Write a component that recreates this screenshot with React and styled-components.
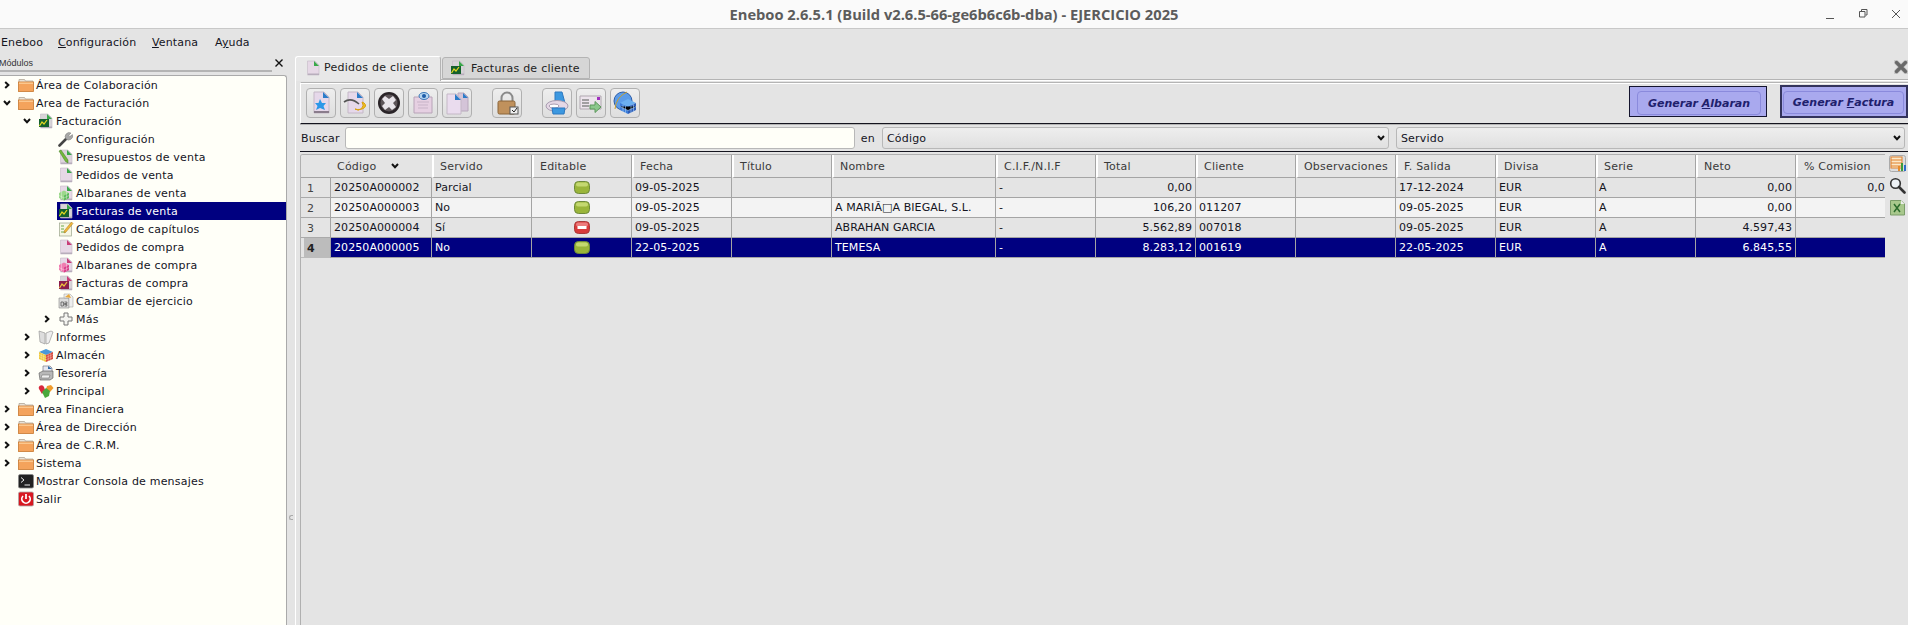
import React from "react";
import styled, { createGlobalStyle } from "styled-components";

const GlobalStyle = createGlobalStyle`
  html, body {
    margin: 0;
    padding: 0;
    background: #e4e4e4;
    overflow: hidden;
  }
  * {
    box-sizing: border-box;
  }
`;

const Window = styled.div`
  width: 1908px;
  height: 625px;
  display: flex;
  flex-direction: column;
  overflow: hidden;
  background: #e4e4e4;
  color: #14141e;
  font-family: "DejaVu Sans", sans-serif;
  font-size: 11px;
`;

const TitleBar = styled.div`
  height: 29px;
  flex: none;
  display: grid;
  grid-template-columns: 1fr auto 1fr;
  align-items: center;
  background: #fafafa;
  border-bottom: 1px solid #c8c8c8;
`;

const Title = styled.div`
  grid-column: 2;
  font-family: "Open Sans", sans-serif;
  font-size: 14.7px;
  font-weight: 700;
  color: #5c5c5c;
`;

const WindowButtons = styled.div`
  grid-column: 3;
  justify-self: end;
  display: flex;
  align-items: center;
  gap: 23px;
  padding-right: 7px;
`;

const MenuBar = styled.div`
  height: 27px;
  flex: none;
  display: flex;
  align-items: center;
  padding-left: 1px;
  letter-spacing: 0.15px;
`;

const MenuItem = styled.span`
  width: ${(p) => p.$w}px;
  white-space: nowrap;
`;

const Main = styled.div`
  flex: 1;
  min-height: 0;
  display: flex;
`;

const Sidebar = styled.div`
  width: 287px;
  flex: none;
  display: flex;
  flex-direction: column;
`;

const DockTitle = styled.div`
  height: 19px;
  flex: none;
  display: flex;
  align-items: center;
  justify-content: space-between;
  padding: 0 3px 5px 0;
`;

const DockLabel = styled.span`
  width: 272px;
  margin-top: 4px;
  padding-bottom: 2px;
  border-bottom: 2px solid #b4b4b4;
  font-family: "Liberation Sans", sans-serif;
  font-size: 9px;
  color: #333;
  text-indent: -1px;
  overflow: hidden;
`;

const Tree = styled.div`
  flex: 1;
  background: #fffff8;
  border: 1px solid #aaa;
  border-left: 0;
  border-bottom: 0;
  border-top-right-radius: 3px;
`;

const TreeRow = styled.div`
  height: 18px;
  display: flex;
  align-items: center;
  padding-left: ${(p) => p.$level * 20}px;
  letter-spacing: 0.2px;
`;

const Arrow = styled.span`
  width: 17px;
  height: 18px;
  flex: none;
  display: flex;
  align-items: center;
  justify-content: center;
  padding-right: 3px;
`;

const TreeItem = styled.div`
  flex: 1;
  height: 18px;
  display: flex;
  align-items: center;
  gap: 2px;
  padding-left: 1px;
  background: ${(p) => (p.$selected ? "#000080" : "transparent")};
  color: ${(p) => (p.$selected ? "#fff" : "inherit")};
`;

const IconSlot = styled.span`
  width: 16px;
  height: 16px;
  flex: none;
  display: flex;
`;

const Splitter = styled.div`
  width: 8px;
  flex: none;
  display: flex;
  align-items: flex-end;
  justify-content: center;
  padding-bottom: 105px;
`;

const SplitterDot = styled.span`
  width: 4px;
  height: 5px;
  border-left: 1px solid #aaa;
  border-top: 1px solid #aaa;
  border-bottom: 1px solid #aaa;
  border-radius: 3px 0 0 3px;
`;

const Content = styled.div`
  flex: 1;
  min-width: 0;
  display: flex;
  flex-direction: column;
`;

const TabBar = styled.div`
  height: 23px;
  flex: none;
  display: flex;
  align-items: flex-end;
  gap: 1px;
`;

const Tab = styled.div`
  width: ${(p) => p.$w}px;
  height: ${(p) => (p.$active ? 25 : 22)}px;
  margin-bottom: ${(p) => (p.$active ? -2 : 0)}px;
  position: relative;
  z-index: ${(p) => (p.$active ? 1 : 0)};
  display: flex;
  align-items: center;
  gap: ${(p) => (p.$active ? 3 : 5)}px;
  padding: ${(p) => (p.$active ? "0 0 3px 9px" : "0 0 0 7px")};
  background: ${(p) => (p.$active ? "#e8e8e8" : "#d6d6d6")};
  border: 1px solid #b4b4b4;
  border-bottom: ${(p) => (p.$active ? "0" : "1px solid #b4b4b4")};
  border-top-color: ${(p) => (p.$active ? "#fff" : "#b4b4b4")};
  border-left-color: ${(p) => (p.$active ? "#fff" : "#b4b4b4")};
  border-radius: 3px 3px 0 0;
  letter-spacing: 0.25px;
  color: #222;
`;

const CornerClose = styled.span`
  margin-left: auto;
  margin-bottom: 5px;
  display: flex;
`;

const Pane = styled.div`
  flex: 1;
  min-height: 0;
  display: flex;
  flex-direction: column;
  padding-left: 4px;
  border-top: 1px solid #b4b4b4;
  border-left: 1px solid #fff;
  box-shadow: inset 0 1px 0 #fff;
`;

const Toolbar = styled.div`
  height: 42px;
  margin-top: 2px;
  flex: none;
  display: flex;
  align-items: center;
  padding-left: 1px;
  border-top: 1px solid #b4b4b4;
  border-left: 1px solid #fff;
  box-shadow: inset 0 1px 0 #fff;
  border-bottom: 1px solid #14141e;
`;

const ToolButton = styled.button`
  width: 30px;
  height: 30px;
  flex: none;
  margin-left: ${(p) => p.$gap ?? 4}px;
  padding: 0;
  display: flex;
  align-items: center;
  justify-content: center;
  background: linear-gradient(#eeeeee, #dedede);
  border: 1px solid #b0b0b0;
  border-radius: 4px;
`;

const GenerateButton = styled.button`
  width: ${(p) => p.$w}px;
  height: ${(p) => p.$h}px;
  flex: none;
  margin-left: ${(p) => p.$left};
  margin-bottom: 3px;
  padding: ${(p) => p.$pad};
  display: flex;
  background: #a9a9ee;
  border: ${(p) => (p.$thick ? "2px solid #33335c" : "1px solid #14142e")};
`;

const GenerateInner = styled.span`
  flex: 1;
  display: flex;
  align-items: center;
  justify-content: center;
  border: 1px solid #8a8adc;
  border-radius: 4px;
  font-family: "DejaVu Sans", sans-serif;
  font-size: 11px;
  font-weight: 700;
  font-style: italic;
  color: #20206c;
  white-space: pre;
`;

const SearchRow = styled.div`
  height: 28px;
  flex: none;
  display: flex;
  align-items: center;
  padding: 1px 0 1px 1px;
  border-top: 1px solid #b4b4b4;
  border-bottom: 1px solid #14141e;
  letter-spacing: 0.2px;
`;

const SearchInput = styled.div`
  width: 510px;
  height: 22px;
  margin: 0 6px 0 5px;
  flex: none;
  background: #fffff8;
  border: 1px solid #b8b8b8;
  border-radius: 3px;
`;

const Select = styled.div`
  width: ${(p) => p.$w}px;
  height: 22px;
  margin-left: ${(p) => p.$left}px;
  flex: none;
  display: flex;
  align-items: center;
  justify-content: space-between;
  padding: 0 3px 0 4px;
  background: linear-gradient(#eeeeee, #e0e0e0);
  border: 1px solid #b8b8b8;
  border-radius: 3px;
`;

const TableArea = styled.div`
  flex: 1;
  min-height: 0;
  display: flex;
  margin-top: 2px;
`;

const Table = styled.div`
  width: 1585px;
  flex: none;
  overflow: hidden;
  border-top: 1px solid #b0b0b0;
  border-left: 1px solid #b0b0b0;
  border-top-left-radius: 3px;
`;

const COLUMNS = "30px 101px repeat(4, 100px) 164px repeat(9, 100px)";

const GridRow = styled.div`
  width: 1700px;
  height: ${(p) => (p.$header ? 23 : 20)}px;
  display: grid;
  grid-template-columns: ${COLUMNS};
  background: ${(p) =>
    p.$selected ? "#000080" : p.$even ? "#f3f3f3" : "#e4e4e4"};
  color: ${(p) => (p.$selected ? "#fff" : "#14141e")};
`;

const HeaderCell = styled.div`
  display: flex;
  align-items: center;
  justify-content: space-between;
  padding: 0 32px 0 6px;
  background: #e4e4e4;
  color: #3a3a3a;
  border-left: ${(p) => (p.$first ? "0" : "2px solid #fff")};
  border-bottom: 1px solid #a4a4a4;
  border-right: 1px solid ${(p) => (p.$first ? "#e4e4e4" : "#a4a4a4")};
  letter-spacing: 0.2px;
  white-space: nowrap;
`;

const RowHeader = styled.div`
  display: flex;
  align-items: center;
  padding-left: 6px;
  background: ${(p) =>
    p.$selected ? "linear-gradient(90deg, #e4e4e4 3px, #bcbcbc 3px)" : "#e4e4e4"};
  color: ${(p) => (p.$selected ? "#222" : "#444")};
  font-weight: ${(p) => (p.$selected ? 700 : 400)};
  box-shadow: inset 0 -1px 0 ${(p) => (p.$selected ? "#bcbcbc" : "#aaa")};
  border-right: 1px solid #a4a4a4;
`;

const Cell = styled.div`
  display: flex;
  align-items: center;
  justify-content: ${(p) =>
    p.$align === "right"
      ? "flex-end"
      : p.$align === "center"
      ? "center"
      : "flex-start"};
  padding: 0 3px;
  border-right: 1px solid #a4a4a4;
  border-bottom: 1px solid #a4a4a4;
  white-space: nowrap;
  letter-spacing: 0.08px;
`;

const SideTools = styled.div`
  flex: none;
  display: flex;
  flex-direction: column;
  gap: 5px;
  padding: 1px 0 0 4px;
`;

const SideTool = styled.span`
  width: 17px;
  height: 17px;
  display: flex;
`;

const Svg = ({ size = 16, children }) => (
  <svg width={size} height={size} viewBox="0 0 16 16" style={{ display: "block" }}>
    {children}
  </svg>
);

const Big = ({ children }) => (
  <svg width="24" height="24" viewBox="0 0 24 24" style={{ display: "block" }}>
    {children}
  </svg>
);

const Chevron = ({ open }) => (
  <svg width="8" height="8" viewBox="0 0 8 8" style={{ display: "block" }}>
    <path
      d={open ? "M1 2 L4 5.2 L7 2" : "M2.2 1 L5.4 4 L2.2 7"}
      fill="none"
      stroke="#111"
      strokeWidth="2"
    />
  </svg>
);

const Folder = () => (
  <Svg>
    <path d="M1 2.5 h5.5 l1 1.5 H15 v2 H1z" fill="#e8e2d8" stroke="#a89c8c" strokeWidth=".7" />
    <rect x="0.5" y="5" width="15" height="9.5" fill="#f4a35c" stroke="#c87830" strokeWidth=".8" />
    <rect x="1" y="5.5" width="14" height="1.5" fill="#fbc78e" />
  </Svg>
);

const Page = ({ corner = "#3aa84a", fill = "#e6d8e6" }) => (
  <>
    <path d="M2.5 1 H10 L14 5 V15 H2.5z" fill={fill} stroke="#c4b8c6" strokeWidth=".6" />
    <path d="M9 1 L14 6 H9z" fill={corner} />
    <path d="M3 13.5 H14 V15 H3z" fill="#b8aebc" />
  </>
);

const DocIcon = ({ corner }) => (
  <Svg>
    <Page corner={corner} />
  </Svg>
);

const ChartDoc = ({ corner = "#3aa84a", base = "#14602c", line = "#e4d820" }) => (
  <Svg>
    <Page corner={corner} fill="#d8d4d8" />
    <rect x="1" y="6" width="10" height="8" fill={base} />
    <path d="M1.5 13 L4 9 L6 11 L9 7" fill="none" stroke={line} strokeWidth="1.2" />
  </Svg>
);

const CubeDoc = ({ corner, cube, shade }) => (
  <Svg>
    <Page corner={corner} />
    <path d="M1 8 L6 5.5 L11 8 V13 L6 15.5 L1 13z" fill={cube} />
    <path d="M6 10.5 V15.5 L11 13 V8z" fill={shade} />
    <path d="M1 10.5 L6 13 L11 10.5 M3.5 6.8 V14 M8.5 6.8 V14" fill="none" stroke="#fff" strokeWidth=".5" opacity=".7" />
  </Svg>
);

const WrenchIcon = () => (
  <Svg>
    <path d="M1.5 14.5 L8.5 7.5" stroke="#444" strokeWidth="2.6" strokeLinecap="round" />
    <path d="M8 8 A4 4 0 0 1 13 2 L10.8 4.2 L11.8 5.6 L14.4 3.6 A4 4 0 0 1 8 8z" fill="#a8a8a8" stroke="#777" strokeWidth=".5" />
  </Svg>
);

const PencilDoc = () => (
  <Svg>
    <Page fill="#ddd4dd" corner="#3aa84a" />
    <path d="M1 2 L3 1 L10 11 L10 14 L7.5 12.5z" fill="#74b83c" stroke="#3c7a20" strokeWidth=".5" />
  </Svg>
);

const NoteIcon = () => (
  <Svg>
    <rect x="1.5" y="2" width="12" height="13" fill="#f6f6e4" stroke="#9aa48c" strokeWidth=".7" />
    <path d="M3 5 H6 M3 8 H6 M3 11 H8" stroke="#6aa84a" strokeWidth="1" />
    <path d="M13.5 1 L15 2.5 L8 11 L6 12 L6.5 9.5z" fill="#f0b83c" stroke="#a87820" strokeWidth=".5" />
  </Svg>
);

const OsDoc = () => (
  <Svg>
    <path d="M1 5 H11 V15 H1z" fill="#dcdcdc" stroke="#888" strokeWidth=".6" />
    <path d="M6 1 H12 L15 4 V14 H11 V5 H6z" fill="#eee" stroke="#999" strokeWidth=".5" />
    <path d="M7 4 L11 1 L13 5z" fill="#e8a83c" />
    <path d="M3 9 h2.4 v4 h-2.4z M6.5 9 h2.4 v1.5 h-2.4 v1 h2.4 v1.5 h-2.4" fill="none" stroke="#555" strokeWidth=".8" />
  </Svg>
);

const PlusIcon = () => (
  <Svg>
    <path d="M6 2 H10 V6 H14 V10 H10 V14 H6 V10 H2 V6 H6z" fill="#f4f4f0" stroke="#777" strokeWidth="1" />
  </Svg>
);

const BookIcon = () => (
  <Svg>
    <path d="M1 2 L7 4 V15 L2 13z" fill="#ddd" stroke="#999" strokeWidth=".7" />
    <path d="M8 4 L13 2 L15 3 L11 14 L8 15z" fill="#eee" stroke="#999" strokeWidth=".7" />
  </Svg>
);

const RubikIcon = () => (
  <Svg>
    <path d="M1 5 L8 2 L15 5 L8 8z" fill="#4a98d8" />
    <path d="M1 5 L8 8 V15 L1 12z" fill="#f0c83c" />
    <path d="M15 5 L8 8 V15 L15 12z" fill="#d84a3c" />
    <path d="M3.3 6 V13 M5.6 7 V14 M1 7.4 L8 10.4 M1 9.7 L8 12.7 M10.3 7 V14 M12.6 6 V13 M15 7.4 L8 10.4 M15 9.7 L8 12.7" stroke="#fff" strokeWidth=".5" opacity=".6" />
  </Svg>
);

const TreasuryIcon = () => (
  <Svg>
    <path d="M5 1 H12 L14 3 V8 H5z" fill="#e8e8f0" stroke="#667" strokeWidth=".6" />
    <path d="M10 1 L14 4 H10z" fill="#2c6ca8" />
    <path d="M1 8 L5 6 H15 V13 L12 15 H2z" fill="#b8b8b8" stroke="#555" strokeWidth=".6" />
    <path d="M4 10 H12 L11 13 H3z" fill="#eee" stroke="#666" strokeWidth=".5" />
  </Svg>
);

const PrincipalIcon = () => (
  <Svg>
    <path d="M1 6 A2.5 2.5 0 0 1 6 4 L7 7 L4 11z" fill="#d8283c" />
    <path d="M9 3 L13 2 L15.5 5 L12 9 L8 6z" fill="#f09c2c" />
    <path d="M4 9 L8 5 L12 8 L11 13 L7 15z" fill="#4aa83c" />
  </Svg>
);

const ConsoleIcon = () => (
  <Svg>
    <rect x="0.5" y="1.5" width="15" height="13.5" rx="1.5" fill="#222" stroke="#888" strokeWidth=".8" />
    <path d="M3 4.5 L6 7 L3 9.5" fill="none" stroke="#eee" strokeWidth="1" />
    <path d="M6.5 12 H12" stroke="#eee" strokeWidth="1" />
  </Svg>
);

const PowerIcon = () => (
  <Svg>
    <rect x="0.5" y="1" width="15" height="14" rx="1.5" fill="#d81820" stroke="#b0a8a8" strokeWidth=".8" />
    <path d="M5 5 A4.2 4.2 0 1 0 11 5" fill="none" stroke="#fff" strokeWidth="1.7" />
    <path d="M8 3 V8" stroke="#fff" strokeWidth="1.7" />
  </Svg>
);

const TREE = [
  { level: 0, arrow: "closed", icon: <Folder />, label: "Área de Colaboración" },
  { level: 0, arrow: "open", icon: <Folder />, label: "Area de Facturación" },
  { level: 1, arrow: "open", icon: <ChartDoc />, label: "Facturación" },
  { level: 2, icon: <WrenchIcon />, label: "Configuración" },
  { level: 2, icon: <PencilDoc />, label: "Presupuestos de venta" },
  { level: 2, icon: <DocIcon />, label: "Pedidos de venta" },
  { level: 2, icon: <CubeDoc corner="#3aa84a" cube="#9cd88c" shade="#5cb85c" />, label: "Albaranes de venta" },
  { level: 2, icon: <ChartDoc />, label: "Facturas de venta", selected: true },
  { level: 2, icon: <NoteIcon />, label: "Catálogo de capítulos" },
  { level: 2, icon: <DocIcon corner="#c83c78" />, label: "Pedidos de compra" },
  { level: 2, icon: <CubeDoc corner="#c83c78" cube="#f07cb0" shade="#d83c88" />, label: "Albaranes de compra" },
  { level: 2, icon: <ChartDoc corner="#c83c78" base="#8c1c4c" line="#f0c83c" />, label: "Facturas de compra" },
  { level: 2, icon: <OsDoc />, label: "Cambiar de ejercicio" },
  { level: 2, arrow: "closed", icon: <PlusIcon />, label: "Más" },
  { level: 1, arrow: "closed", icon: <BookIcon />, label: "Informes" },
  { level: 1, arrow: "closed", icon: <RubikIcon />, label: "Almacén" },
  { level: 1, arrow: "closed", icon: <TreasuryIcon />, label: "Tesorería" },
  { level: 1, arrow: "closed", icon: <PrincipalIcon />, label: "Principal" },
  { level: 0, arrow: "closed", icon: <Folder />, label: "Area Financiera" },
  { level: 0, arrow: "closed", icon: <Folder />, label: "Área de Dirección" },
  { level: 0, arrow: "closed", icon: <Folder />, label: "Área de C.R.M." },
  { level: 0, arrow: "closed", icon: <Folder />, label: "Sistema" },
  { level: 0, icon: <ConsoleIcon />, label: "Mostrar Consola de mensajes" },
  { level: 0, icon: <PowerIcon />, label: "Salir" },
];

const HEADERS = [
  "Código",
  "Servido",
  "Editable",
  "Fecha",
  "Título",
  "Nombre",
  "C.I.F./N.I.F",
  "Total",
  "Cliente",
  "Observaciones",
  "F. Salida",
  "Divisa",
  "Serie",
  "Neto",
  "% Comision",
];

const ROWS = [
  { codigo: "20250A000002", servido: "Parcial", ok: true, fecha: "09-05-2025", nombre: "", total: "0,00", cliente: "", salida: "17-12-2024", neto: "0,00", comision: "0,00" },
  { codigo: "20250A000003", servido: "No", ok: true, fecha: "09-05-2025", nombre: "A MARIÃ\u25A1A BIEGAL, S.L.", total: "106,20", cliente: "011207", salida: "09-05-2025", neto: "0,00", comision: "" },
  { codigo: "20250A000004", servido: "Sí", ok: false, fecha: "09-05-2025", nombre: "ABRAHAN GARCIA", total: "5.562,89", cliente: "007018", salida: "09-05-2025", neto: "4.597,43", comision: "" },
  { codigo: "20250A000005", servido: "No", ok: true, fecha: "22-05-2025", nombre: "TEMESA", total: "8.283,12", cliente: "001619", salida: "22-05-2025", neto: "6.845,55", comision: "" },
];

const EditablePill = ({ ok }) => (
  <svg width="16" height="13" viewBox="0 0 16 13" style={{ display: "block" }}>
    <rect x="0.5" y="0.5" width="15" height="12" rx="4" fill={ok ? "#9ab53a" : "#d83a3a"} stroke={ok ? "#6e8a3c" : "#a83a3a"} />
    <rect x="2" y="1.5" width="12" height="4" rx="2" fill={ok ? "#c4d870" : "#ec7c7c"} />
    {!ok && <rect x="3.5" y="5" width="9" height="3" fill="#fff" />}
  </svg>
);

const TOOL_ICONS = [
  {
    key: "new",
    draw: (
      <>
        <path d="M5 1 H15 L20 6 V22 H5z" fill="#e6d8ea" stroke="#c4b8c6" />
        <path d="M14 1 L20 7 H14z" fill="#2c7cc8" />
        <path d="M20 20 H5 V22 H20z" fill="#8a7c8c" />
        <path d="M11 8 L13 12 L17 12 L14.5 15 L16 19 L11 17 L7 19 L8.5 15 L6 12 L9.5 12z" fill="#2c98e8" />
      </>
    ),
  },
  {
    key: "edit",
    draw: (
      <>
        <path d="M5 1 H15 L20 6 V22 H5z" fill="#e6d8ea" stroke="#c4b8c6" />
        <path d="M14 1 L20 7 H14z" fill="#2c7cc8" />
        <path d="M1 11 Q8 6 16 13" fill="none" stroke="#555" strokeWidth="1.6" />
        <path d="M19 11 A5 5 0 0 1 12 18 A7 4 0 0 0 19 11z" fill="#f0c020" stroke="#d8a010" />
      </>
    ),
  },
  {
    key: "delete",
    draw: (
      <>
        <circle cx="12" cy="12" r="11" fill="#2a2428" />
        <circle cx="12" cy="12" r="8.5" fill="#5c5458" />
        <path d="M8 5 L12 8 L16 5 L19 9 L16 12 L19 16 L15 19 L12 16 L8 19 L5 15 L8 12 L5 8z" fill="#e8e4ea" />
      </>
    ),
  },
  {
    key: "view",
    draw: (
      <>
        <path d="M3 6 H21 V22 H3z" fill="#e6d0e2" stroke="#b8a4b8" />
        <path d="M6 11 H18 M7 14 H17 M7 17 H17" stroke="#c8b4c8" />
        <ellipse cx="13" cy="5" rx="5" ry="3.5" fill="#b4d4f0" stroke="#3c78b8" />
        <circle cx="13" cy="5" r="2" fill="#1c5ca8" />
      </>
    ),
  },
  {
    key: "copy",
    draw: (
      <>
        <path d="M13 2 H19 L23 6 V20 H13z" fill="#d4c4d8" stroke="#b8a8bc" />
        <path d="M18 2 L23 7 H18z" fill="#2c7cc8" />
        <path d="M2 3 H11 L16 8 V23 H2z" fill="#eadcee" stroke="#c4b8c6" />
        <path d="M10 3 L16 9 H10z" fill="#2c7cc8" />
      </>
    ),
  },
  {
    key: "lock",
    gap: 20,
    draw: (
      <>
        <path d="M6.5 11 V7 A5.5 5.5 0 0 1 17.5 7 V11" fill="none" stroke="#8a8a8a" strokeWidth="2" />
        <rect x="3" y="10" width="17" height="13" rx="1.5" fill="#c0915c" stroke="#8a6438" />
        <rect x="15" y="16" width="8" height="7" fill="#f0f0f0" stroke="#555" />
        <path d="M17 19 L19 21 L22 17" fill="none" stroke="#222" />
      </>
    ),
  },
  {
    key: "print",
    gap: 20,
    draw: (
      <>
        <path d="M10 1 H17 L20 12 H10z" fill="#3c98e0" stroke="#2c78c0" />
        <ellipse cx="12" cy="15" rx="11" ry="5.5" fill="#e6d8e6" stroke="#a89cb0" />
        <ellipse cx="9" cy="15" rx="5" ry="2" fill="#fff" stroke="#a89cb0" />
        <path d="M7 17 H20 L19 23 H8z" fill="#3c98e0" stroke="#2c78c0" />
      </>
    ),
  },
  {
    key: "mail",
    draw: (
      <>
        <path d="M1 5 H22 V18 H1z" fill="#ece4ec" stroke="#b0a8b0" />
        <path d="M3 9 H10 M3 12 H10 M3 15 H10" stroke="#888" strokeWidth="1.3" />
        <rect x="18" y="6" width="3" height="3" fill="#a030c0" />
        <path d="M11 14 H16 V10.5 L22 16 L16 21.5 V18 H11z" fill="#8cc88c" stroke="#5c985c" />
      </>
    ),
  },
  {
    key: "web",
    draw: (
      <>
        <circle cx="10" cy="10" r="9" fill="#5c9ce8" stroke="#2c5ca8" />
        <path d="M2 18 Q3 6 14 1" fill="none" stroke="#c8a030" strokeWidth="1" />
        <path d="M7 12 L15 8 L23 12 L15 16z" fill="#6cb0f0" />
        <path d="M7 12 L15 16 V23 L7 19z" fill="#3c7cd8" />
        <path d="M23 12 L15 16 V23 L23 19z" fill="#2c5cb8" />
        <path d="M10 13.5 V21 M12.5 15 V22 M18 15 V22 M20.5 13.5 V21 M7 15.5 L15 19.5 L23 15.5" stroke="#a8d0f8" strokeWidth=".6" />
      </>
    ),
  },
];

export default function App() {
  return (
    <Window>
      <GlobalStyle />
      <TitleBar>
        <Title>Eneboo 2.6.5.1 (Build v2.6.5-66-ge6b6c6b-dba) - EJERCICIO 2025</Title>
        <WindowButtons>
          <svg width="10" height="10" viewBox="0 0 10 10">
            <path d="M1 9.5 H9" stroke="#555" strokeWidth="1" />
          </svg>
          <svg width="10" height="10" viewBox="0 0 10 10">
            <path d="M3.5 2 V0.5 H9 V6 H7.5 M1.5 2.5 H7 V8 H1.5z" fill="none" stroke="#555" strokeWidth="1" />
          </svg>
          <svg width="10" height="10" viewBox="0 0 10 10">
            <path d="M1 1 L9 9 M9 1 L1 9" stroke="#555" strokeWidth="1" />
          </svg>
        </WindowButtons>
      </TitleBar>

      <MenuBar>
        <MenuItem $w={57}>Eneboo</MenuItem>
        <MenuItem $w={94}><u>C</u>onfiguración</MenuItem>
        <MenuItem $w={63}><u>V</u>entana</MenuItem>
        <MenuItem $w={50}>A<u>y</u>uda</MenuItem>
      </MenuBar>

      <Main>
        <Sidebar>
          <DockTitle>
            <DockLabel>Módulos</DockLabel>
            <svg width="10" height="10" viewBox="0 0 10 10">
              <path d="M1.5 1.5 L8.5 8.5 M8.5 1.5 L1.5 8.5" stroke="#111" strokeWidth="1.4" />
            </svg>
          </DockTitle>
          <Tree>
            {TREE.map((row) => (
              <TreeRow key={row.label} $level={row.level}>
                <Arrow>{row.arrow && <Chevron open={row.arrow === "open"} />}</Arrow>
                <TreeItem $selected={row.selected}>
                  <IconSlot>{row.icon}</IconSlot>
                  {row.label}
                </TreeItem>
              </TreeRow>
            ))}
          </Tree>
        </Sidebar>

        <Splitter>
          <SplitterDot />
        </Splitter>

        <Content>
          <TabBar>
            <Tab $active $w={146}>
              <IconSlot><DocIcon /></IconSlot>
              Pedidos de cliente
            </Tab>
            <Tab $w={148}>
              <IconSlot><ChartDoc /></IconSlot>
              Facturas de cliente
            </Tab>
            <CornerClose>
              <svg width="14" height="14" viewBox="0 0 14 14">
                <path d="M2 2 L12 12 M12 2 L2 12" stroke="#c8c8c8" strokeWidth="5" strokeLinecap="round" />
                <path d="M2.5 2.5 L11.5 11.5 M11.5 2.5 L2.5 11.5" stroke="#6a6a6a" strokeWidth="3.4" strokeLinecap="round" />
              </svg>
            </CornerClose>
          </TabBar>

          <Pane>
            <Toolbar>
              {TOOL_ICONS.map((tool) => (
                <ToolButton key={tool.key} $gap={tool.gap}>
                  <Big>{tool.draw}</Big>
                </ToolButton>
              ))}
              <GenerateButton $w={138} $h={31} $left="auto" $pad="4px 5px 1px 7px">
                <GenerateInner>Generar <u>A</u>lbaran</GenerateInner>
              </GenerateButton>
              <GenerateButton $thick $w={128} $h={33} $left="13px" $pad="4px 2px 2px 1px">
                <GenerateInner>Generar <u>F</u>actura</GenerateInner>
              </GenerateButton>
            </Toolbar>

            <SearchRow>
              Buscar
              <SearchInput />
              en
              <Select $w={507} $left={7}>
                Código
                <Chevron open />
              </Select>
              <Select $w={509} $left={7}>
                Servido
                <Chevron open />
              </Select>
            </SearchRow>

            <TableArea>
              <Table>
                <GridRow $header>
                  <HeaderCell $first />
                  {HEADERS.map((title, i) => (
                    <HeaderCell key={title} $first={i === 0}>
                      {title}
                      {i === 0 && <Chevron open />}
                    </HeaderCell>
                  ))}
                </GridRow>
                {ROWS.map((row, i) => {
                  const selected = i === 3;
                  return (
                    <GridRow key={row.codigo} $even={i % 2 === 1} $selected={selected}>
                      <RowHeader $selected={selected}>{i + 1}</RowHeader>
                      <Cell>{row.codigo}</Cell>
                      <Cell>{row.servido}</Cell>
                      <Cell $align="center"><EditablePill ok={row.ok} /></Cell>
                      <Cell>{row.fecha}</Cell>
                      <Cell />
                      <Cell>{row.nombre}</Cell>
                      <Cell>-</Cell>
                      <Cell $align="right">{row.total}</Cell>
                      <Cell>{row.cliente}</Cell>
                      <Cell />
                      <Cell>{row.salida}</Cell>
                      <Cell>EUR</Cell>
                      <Cell>A</Cell>
                      <Cell $align="right">{row.neto}</Cell>
                      <Cell $align="right">{row.comision}</Cell>
                    </GridRow>
                  );
                })}
              </Table>

              <SideTools>
                <SideTool>
                  <svg width="17" height="17" viewBox="0 0 17 17">
                    <rect x="0.5" y="0.5" width="16" height="16" rx="2" fill="#ddd" stroke="#aaa" />
                    <rect x="2" y="2" width="11" height="11" fill="#fbe8c8" stroke="#e0802c" />
                    <path d="M2 5 H13 M2 8 H13 M2 11 H13" stroke="#e0802c" />
                    <rect x="9" y="11" width="2" height="5" fill="#e88c2c" />
                    <rect x="12" y="8" width="2" height="8" fill="#3c9c3c" />
                    <rect x="15" y="10" width="2" height="6" fill="#2c6cc8" />
                  </svg>
                </SideTool>
                <SideTool>
                  <svg width="17" height="17" viewBox="0 0 17 17">
                    <circle cx="6.5" cy="6.5" r="4.8" fill="#eef2f6" stroke="#333" strokeWidth="1.6" />
                    <path d="M10 10 L15.5 15.5" stroke="#333" strokeWidth="2.6" strokeLinecap="round" />
                  </svg>
                </SideTool>
                <SideTool>
                  <svg width="17" height="17" viewBox="0 0 17 17">
                    <path d="M1.5 1.5 H12 L15.5 5 V16 H1.5z" fill="#a8c88c" stroke="#7a9c68" />
                    <path d="M12 1.5 L15.5 5 H12z" fill="#eee" />
                    <path d="M5 5 L11 13 M11 5 L5 13" stroke="#2c6c2c" strokeWidth="1.5" />
                  </svg>
                </SideTool>
              </SideTools>
            </TableArea>
          </Pane>
        </Content>
      </Main>
    </Window>
  );
}
